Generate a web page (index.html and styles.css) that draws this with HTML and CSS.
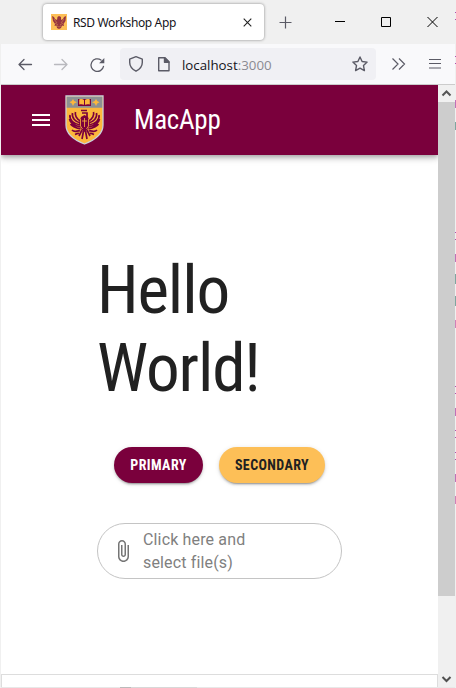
FILE: index.html
```html
<!DOCTYPE html>
<html lang="en">
<head>
<meta charset="utf-8">
<title>RSD Workshop App</title>
<link rel="stylesheet" href="styles.css">
</head>
<body>
<div class="window">
  <header class="tabbar">
    <div class="tab">
      <svg class="favicon" width="16" height="16" viewBox="0 0 16 16"><path fill="#fdbf57" d="M0 0h16v16H0z"/><path fill="#96343f" d="M1 2l2 1 1 2 2 1 .5-3L8 2l2 1v3l2-1 1-2 2-1-.5 5-2 3 .5 2-2-.5L10 14l-2 1-2-1-.5-2.500-2 .5.5-2-2-3z"/><path stroke="#fdbf57" stroke-width=".4" fill="none" d="M3 5l3 4M13 5l-3 4M4 9l3 2M12 9l-3 2M6 12l2 1 2-1"/></svg>
      <span class="tab-title">RSD Workshop App</span>
      <svg class="tab-close" width="9" height="9" viewBox="0 0 9 9"><path d="M.7.700l7.600 7.600M8.300.7L.7 8.300" stroke="#222" stroke-width="1.100"/></svg>
    </div>
    <svg class="newtab" width="13" height="13" viewBox="0 0 13 13"><path d="M6.500.500v12M.5 6.500h12" stroke="#5b5b66" stroke-width="1.200"/></svg>
    <svg class="controls" width="104" height="12" viewBox="0 0 104 12" fill="none" stroke="#000"><path d="M0 5.500h10M46.500 1.500h9v9h-9zM92.500 1l10 10M102.500 1l-10 10"/></svg>
  </header>
  <nav class="toolbar">
    <svg class="navicons" width="90" height="20" viewBox="0 0 90 20" fill="none" stroke="#5b5b66" stroke-width="1.300" stroke-linecap="round" stroke-linejoin="round"><path d="M13.500 10.500H1M6 5.500l-5 5 5 5"/><path stroke="#b9b9be" d="M36.500 10.500H49M44 5.500l5 5-5 5"/><path d="M83 6A6.300 6.300 0 1 0 85.500 12.300"/><path fill="#5b5b66" stroke="none" d="M86.300 4v5.200h-5.200z"/></svg>
    <div class="address">
      <svg width="52" height="18" viewBox="0 0 52 18" fill="none" stroke="#5b5b66" stroke-width="1.400" stroke-linejoin="round"><path d="M8 1.700l6.300 2.500v3.300c0 3.800-2.500 6.700-6.300 8.700-3.800-2-6.300-4.900-6.300-8.700V4.200z"/><path d="M30.700 2.700h6.300l4 4v9H30.700z"/><path fill="#5b5b66" d="M36.500 2.700v4.500H41z"/></svg>
      <span class="url">localhost<span class="port">:3000</span></span>
      <svg class="star" width="16" height="16" viewBox="0 0 16 16" fill="none" stroke="#5b5b66" stroke-width="1.400" stroke-linejoin="round"><path d="M8 1l2.100 4.500 5 .6-3.600 3.500.9 5L8 12.200l-4.400 2.400.9-5L.9 6.100l5-.6z"/></svg>
    </div>
    <svg class="more" width="51" height="14" viewBox="0 0 51 14" fill="none" stroke="#5b5b66" stroke-width="1.200"><path d="M1.500 1.500L7 7l-5.500 5.500M8 1.500L13.500 7 8 12.500M38 2.500h12M38 6.500h12M38 11h12"/></svg>
  </nav>
  <div class="viewport">
    <div class="page">
      <div class="appbar">
        <svg class="menu" width="18" height="12" viewBox="0 0 18 12"><path fill="#fff" d="M0 0h18v2H0zM0 5h18v2H0zM0 10h18v2H0z"/></svg>
        <svg class="crest" width="39" height="50" viewBox="0 0 39 50">
          <path fill="#fdb73c" stroke="#c9d0dc" stroke-width="1.300" d="M1 1h37v29C38 39 30 45 19.500 49 9 45 1 39 1 30z"/>
          <path fill="#8d9093" d="M1.700 1.700h35.600v11H1.700z"/>
          <path fill="#fdb73c" d="M8 4l1.200 2L12 7.200 9.200 8.500 8 11 6.800 8.500 4.500 7.200 6.800 6zM31 4l1.200 2 2.300 1.200-2.300 1.300L31 11l-1.200-2.500L27 7.200 29.800 6z"/>
          <path fill="#7a003c" d="M13 4h13v7H13z"/><path fill="#fdb73c" d="M14.200 4.500c2-.7 3.800-.5 4.800.5v4.800c-1.500-.8-3-.8-4.800-.3zM20 5c1-1 3-1.200 4.800-.5v5c-2-.5-3.300-.5-4.800.3z"/>
          <path fill="none" stroke="#7a003c" stroke-width="1.700" d="M16 15.500h6M17 18h5v4M10.500 17c-1 3 1 7 5 9M7.500 18c-1 5 3 9 8 10M5 20c-1 5 4 9 10 10M4.500 24c1 5 6 7 11 8M5.500 29c2 3 6 4 10 5M28.500 17c1 3-1 7-5 9M31.500 18c1 5-3 9-8 10M34 20c1 5-4 9-10 10M34.500 24c-1 5-6 7-11 8M33.500 29c-2 3-6 4-10 5M15 36c-3-1-5 2-8-1M14 38.500c-2-.5-3 .5-4 1M24 36c3-1 5 2 8-1M25 38.500c2-.5 3 .5 4 1M17 35l-3 6M22 35l3 6M18.500 36l-1.500 8M20.500 36l1.500 8"/>
          <path fill="#7a003c" d="M16 22l3.500-2 3.500 2 2 6-2 6-3.500 3-3.500-3-2-6z"/><path fill="none" stroke="#fdb73c" stroke-width=".8" d="M19.500 23v9M17 26h5M15.500 24v7l2 3M23.500 24v7l-2 3"/>
        </svg>
        <div class="brand"><span class="cond">MacApp</span></div>
      </div>
      <main>
        <h1><span class="cond">Hello<br>World!</span></h1>
        <div class="buttons">
          <button class="primary"><span class="cond">PRIMARY</span></button>
          <button class="secondary"><span class="cond">SECONDARY</span></button>
        </div>
        <div class="file">
          <svg class="clip" width="24" height="24" viewBox="0 0 24 24"><path fill="#757575" d="M16.500 6v11.500c0 2.210-1.790 4-4 4s-4-1.790-4-4V5c0-1.380 1.120-2.500 2.500-2.500s2.500 1.120 2.500 2.500v10.500c0 .55-.45 1-1 1s-1-.45-1-1V6H10v9.500c0 1.380 1.120 2.500 2.500 2.500s2.500-1.120 2.500-2.500V5c0-2.210-1.790-4-4-4S7 2.790 7 5v12.500c0 3.040 2.460 5.500 5.500 5.500s5.500-2.460 5.500-5.500V6h-1.500z"/></svg>
          <span>Click here and<br>select file(s)</span>
        </div>
      </main>
      <div class="bottom"></div>
    </div>
    <div class="scrollbar">
      <svg width="17" height="17" viewBox="0 0 17 17"><path d="M4.500 10.500l4-4 4 4" fill="none" stroke="#555" stroke-width="2"/></svg>
      <div class="thumb"></div>
      <svg class="down" width="17" height="17" viewBox="0 0 17 17"><path d="M4.500 7l4 4 4-4" fill="none" stroke="#505050" stroke-width="2"/></svg>
    </div>
  </div>
  <div class="edge"></div>
</div>
</body>
</html>
```
FILE: styles.css
```css
* { box-sizing: border-box; }
body { margin: 0; background: #f0f0f0; font-family: Roboto, sans-serif; overflow: hidden; }
svg { display: block; flex: none; }
.window { height: 688px; display: flex; flex-direction: column; padding: 0 1px; background:
  linear-gradient(#b050b0, #b050b0) 455px 12px / 1px 1px no-repeat,
  linear-gradient(#b050b0, #b050b0) 455px 19px / 1px 1px no-repeat,
  linear-gradient(#b050b0, #b050b0) 455px 56px / 1px 1px no-repeat,
  linear-gradient(#b050b0, #b050b0) 455px 63px / 1px 1px no-repeat,
  linear-gradient(#c070b8, #c070b8) 455px 100px / 1px 8px no-repeat,
  linear-gradient(#7fa6a0, #7fa6a0) 455px 122px / 1px 8px no-repeat,
  linear-gradient(#b050b0, #b050b0) 455px 232px / 1px 1px no-repeat,
  linear-gradient(#b050b0, #b050b0) 455px 239px / 1px 1px no-repeat,
  linear-gradient(#c070b8, #c070b8) 455px 254px / 1px 8px no-repeat,
  linear-gradient(#7fa6a0, #7fa6a0) 455px 274px / 1px 10px no-repeat,
  linear-gradient(#7fa6a0, #7fa6a0) 455px 296px / 1px 10px no-repeat,
  linear-gradient(#d080b8, #d080b8) 455px 320px / 1px 8px no-repeat,
  linear-gradient(#b050b0, #b050b0) 455px 386px / 1px 1px no-repeat,
  linear-gradient(#b050b0, #b050b0) 455px 393px / 1px 1px no-repeat,
  linear-gradient(#c070b8, #c070b8) 455px 408px / 1px 8px no-repeat,
  linear-gradient(#b050b0, #b050b0) 455px 430px / 1px 1px no-repeat,
  linear-gradient(#b050b0, #b050b0) 455px 437px / 1px 1px no-repeat,
  linear-gradient(#b050b0, #b050b0) 455px 452px / 1px 1px no-repeat,
  linear-gradient(#b050b0, #b050b0) 455px 459px / 1px 1px no-repeat,
  linear-gradient(#c070b8, #c070b8) 455px 474px / 1px 8px no-repeat,
  linear-gradient(#d080b8, #d080b8) 455px 496px / 1px 8px no-repeat,
  #f0f0f0; }
.edge { height: 1px; flex: none; background: linear-gradient(90deg, #e8e8e8 119px, #bbb 119px 130px, #d8d8d8 130px 196px, #e8e8e8 196px); }
.tabbar { height: 44px; background: #f0f0f0; display: flex; align-items: center; flex: none; }
.tab { width: 221px; height: 36px; margin-left: 42px; background: #fff; border-radius: 4px; box-shadow: 0 0 3px rgba(0,0,0,.45); display: flex; align-items: center; padding: 0 12px 0 8px; }
.tab-title { font: 12px "Noto Sans", sans-serif; color: #15141a; margin-left: 6px; white-space: nowrap; letter-spacing: -.37px; }
.tab-close { margin-left: auto; }
.newtab { margin-left: 15px; }
.controls { margin: 0 0 0 43px; }
.toolbar { height: 40px; background: #f9f9fb; display: flex; align-items: center; flex: none; }
.navicons { margin-left: 17px; }
.address { margin-left: 12px; width: 256px; height: 32px; background: #f0f0f4; border-radius: 4px; display: flex; align-items: center; padding: 0 8px; }
.url { font: 13.300px/18px "Open Sans", sans-serif; color: #15141a; margin-left: 2px; padding-top: 1px; }
.port { color: #8a8a92; }
.star { margin-left: auto; }
.more { margin-left: 15px; }
.viewport { flex: 1; display: flex; border-top: 1px solid #ccc; min-height: 0; }
.page { flex: 1; background: #fff; display: flex; flex-direction: column; }
.appbar { height: 70px; background: #7a003c; display: flex; align-items: center; padding-left: 31px; flex: none; box-shadow: 0 2px 4px -1px rgba(0,0,0,.2), 0 4px 5px rgba(0,0,0,.14), 0 1px 10px rgba(0,0,0,.12); clip-path: inset(0 0 -20px 0); }
.crest { margin-left: 15px; }
.brand { margin-left: 30px; color: #fff; font-size: 27px; letter-spacing: -.25px; }
.cond { display: inline-block; font-family: "Roboto Condensed", Roboto, sans-serif; font-stretch: 75%; white-space: nowrap; }
main { padding: 96px 96px 0; flex: 1; }
h1 { margin: 0; font-weight: 400; font-size: 67.200px; line-height: 78px; color: #212121; letter-spacing: -1.150px; }
.buttons { display: flex; gap: 16px; padding: 40px 0 0 17px; }
button { border: 0; height: 36px; border-radius: 18px; font-size: 14px; font-weight: 700; padding: 0 0 1px; letter-spacing: .4px; box-shadow: 0 3px 1px -2px rgba(0,0,0,.2), 0 2px 2px rgba(0,0,0,.14), 0 1px 5px rgba(0,0,0,.12); display: flex; justify-content: center; align-items: center; }
.primary { width: 89px; background: #7a003c; color: #fff; }
.secondary { width: 106px; background: #fdbf57; color: #212121; }
.file { width: 245px; height: 56px; margin-top: 40px; border: 1px solid #c4c4c4; border-radius: 28px; display: flex; align-items: center; padding-left: 13px; font-size: 16px; line-height: 23px; letter-spacing: .15px; color: #808080; }
.file span { margin-left: 8px; }
.bottom { height: 13px; border: 1px solid #ddd; border-bottom: 0; flex: none; }
.scrollbar { width: 17px; background: #f0f0f0; display: flex; flex-direction: column; }
.thumb { height: 494px; background: #cdcdcd; }
.down { margin-top: auto; }
```
